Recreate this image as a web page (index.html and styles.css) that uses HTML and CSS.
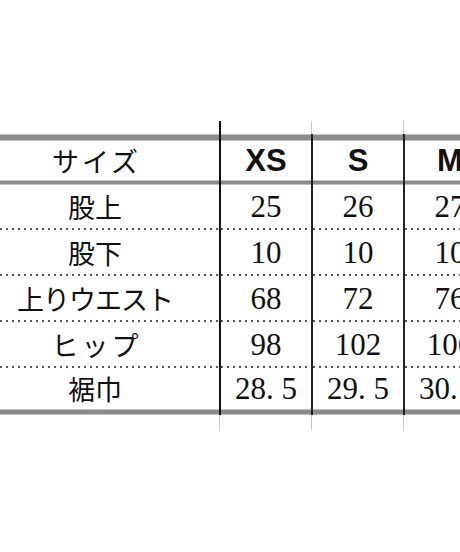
FILE: index.html
```
<!DOCTYPE html>
<html lang="ja">
<head>
<meta charset="utf-8">
<title>サイズ表</title>
<link rel="stylesheet" href="styles.css">
</head>
<body>
<div class="page">
  <div class="sheet">
    <div class="col c-label">
      <div class="strip strip-top strong"></div>
      <div class="body">
        <div class="rule thick"></div>
        <div class="cell head jp wide">サイズ</div>
        <div class="rule mid"></div>
        <div class="cell dot r1 jp">股上</div>
        <div class="cell dot r2 jp">股下</div>
        <div class="cell dot r3 jp tight">上りウエスト</div>
        <div class="cell dot r4 jp wide">ヒップ</div>
        <div class="cell r5 jp">裾巾</div>
        <div class="rule bottom"></div>
      </div>
      <div class="strip strip-bottom"></div>
    </div>
    <div class="col c-size">
      <div class="strip strip-top"></div>
      <div class="body">
        <div class="rule thick"></div>
        <div class="cell head size">XS</div>
        <div class="rule mid"></div>
        <div class="cell dot r1 num">25</div>
        <div class="cell dot r2 num">10</div>
        <div class="cell dot r3 num">68</div>
        <div class="cell dot r4 num">98</div>
        <div class="cell r5 num">28. 5</div>
        <div class="rule bottom"></div>
      </div>
      <div class="strip strip-bottom"></div>
    </div>
    <div class="col c-size">
      <div class="strip strip-top"></div>
      <div class="body">
        <div class="rule thick"></div>
        <div class="cell head size">S</div>
        <div class="rule mid"></div>
        <div class="cell dot r1 num">26</div>
        <div class="cell dot r2 num">10</div>
        <div class="cell dot r3 num">72</div>
        <div class="cell dot r4 num">102</div>
        <div class="cell r5 num">29. 5</div>
        <div class="rule bottom"></div>
      </div>
      <div class="strip strip-bottom"></div>
    </div>
    <div class="col c-size">
      <div class="strip strip-top"></div>
      <div class="body">
        <div class="rule thick"></div>
        <div class="cell head size">M</div>
        <div class="rule mid"></div>
        <div class="cell dot r1 num">27</div>
        <div class="cell dot r2 num">10</div>
        <div class="cell dot r3 num">76</div>
        <div class="cell dot r4 num">106</div>
        <div class="cell r5 num">30. 5</div>
        <div class="rule bottom"></div>
      </div>
      <div class="strip strip-bottom"></div>
    </div>
  </div>
</div>
</body>
</html>
```
FILE: styles.css
```
html, body {
  margin: 0;
  padding: 0;
  background: #ffffff;
}

.page {
  width: 460px;
  height: 552px;
  overflow: hidden;
  padding-top: 121px;
  box-sizing: border-box;
}

.sheet {
  display: flex;
  width: 600px;
}

.col {
  display: flex;
  flex-direction: column;
  flex: none;
}

.c-label {
  width: 221px;
}

.c-size {
  width: 92px;
}

.strip {
  box-sizing: border-box;
  border-right: 1px solid #c9c9c9;
  margin-right: 1px;
}

.strip-top {
  height: 13px;
}

.strip-top.strong {
  border-right: 2px solid #111111;
  margin-right: 0;
}

.strip-bottom {
  height: 15px;
}

.body {
  box-sizing: border-box;
  border-right: 2px solid #111111;
  display: flex;
  flex-direction: column;
}

.c-size .body {
  border-right-color: #222222;
}

.rule {
  box-sizing: border-box;
  background: #8a8a8a;
  border-top: 1px solid #c4c4c4;
  border-bottom: 1px solid #c4c4c4;
}

.rule.thick {
  height: 7px;
}

.rule.mid {
  height: 5px;
}

.rule.bottom {
  height: 6px;
}

.cell {
  display: flex;
  align-items: center;
  justify-content: center;
  box-sizing: border-box;
  color: #111111;
}

.c-label .cell {
  padding-right: 29px;
}

.head {
  height: 39px;
}

.r1 { height: 45px; padding-bottom: 2px; }
.r2, .r3, .r4 { height: 46px; padding-bottom: 2px; }
.r5 { height: 41px; }

.dot {
  background-image: linear-gradient(to right, #555555 0 2px, transparent 2px);
  background-size: 6px 2px;
  background-repeat: repeat-x;
  background-position: 0 100%;
}

.jp {
  font-family: "Noto Sans CJK JP", sans-serif;
  font-size: 27px;
  font-weight: 400;
  line-height: 1;
}

.c-label .wide {
  letter-spacing: 3px;
  padding-left: 3px;
}

.tight {
  letter-spacing: -1px;
}

.num {
  font-family: "Liberation Serif", serif;
  font-size: 31px;
  line-height: 1;
  white-space: pre;
}

.size {
  font-family: "Liberation Sans", Arial, sans-serif;
  font-weight: 700;
  font-size: 31px;
  line-height: 1;
}
```
